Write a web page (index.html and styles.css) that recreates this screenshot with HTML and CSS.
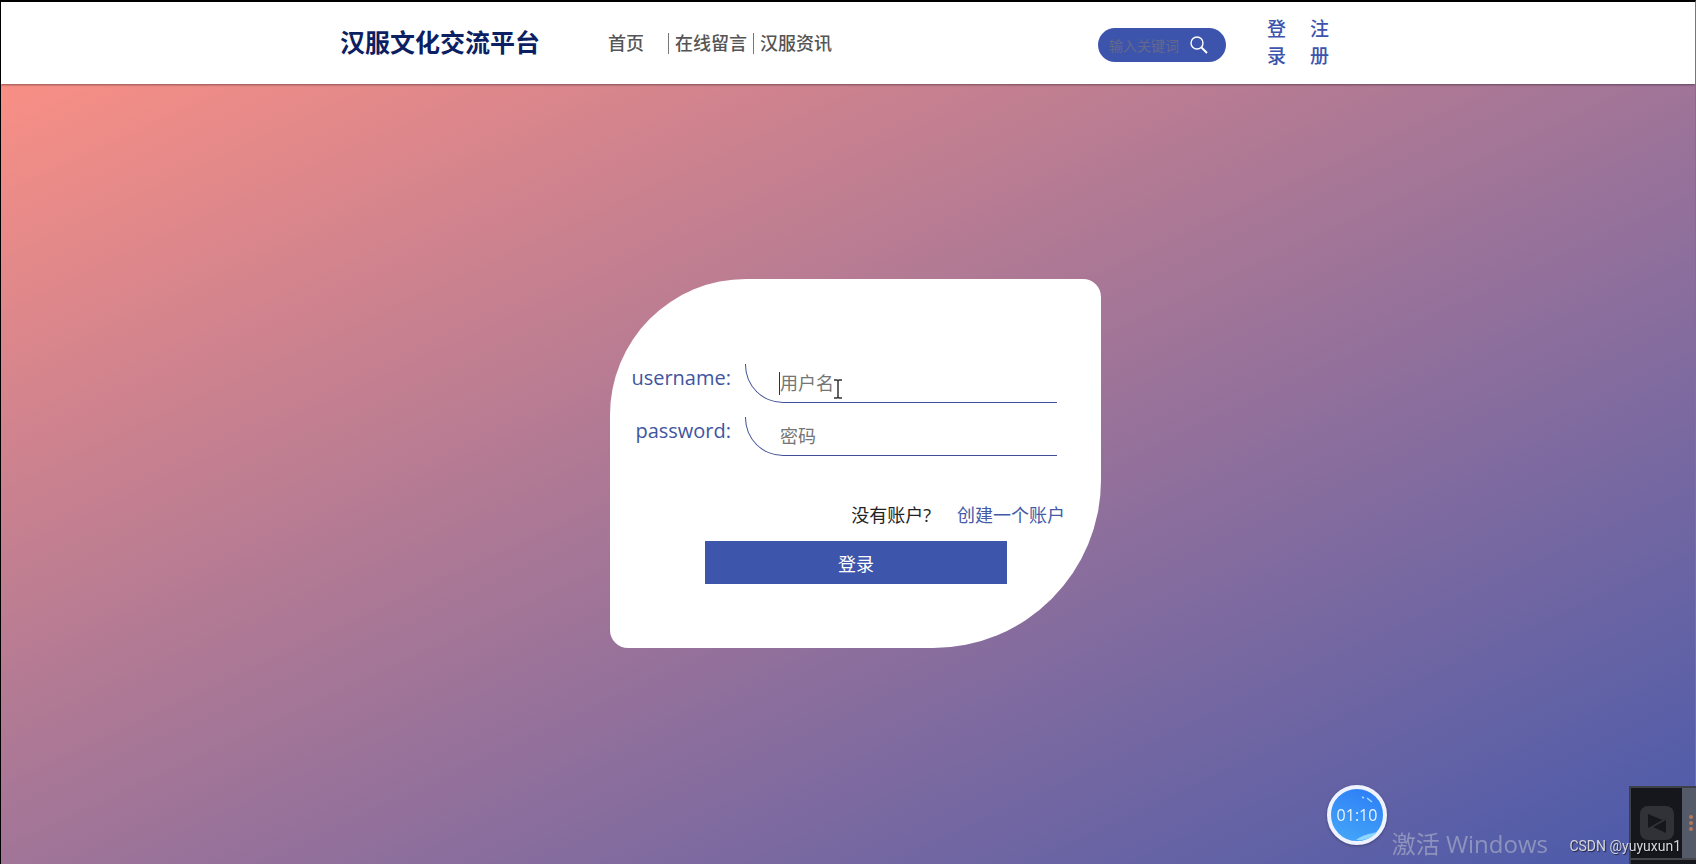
FILE: index.html
```
<!DOCTYPE html>
<html lang="zh-CN">
<head>
    <meta charset="UTF-8">
    <meta name="viewport" content="width=device-width, initial-scale=1.0">
    <title>汉服文化交流平台</title>
    <link rel="stylesheet" href="styles.css">
</head>
<body>

    <!-- Top navigation -->
    <header class="header">
        <div class="container">
            <a class="brand" href="#">汉服文化交流平台</a>
            <nav class="nav">
                <a class="nav-home" href="#">首页</a>
                <a class="nav-item" href="#">在线留言</a>
                <a class="nav-item" href="#">汉服资讯</a>
            </nav>
            <form class="search">
                <input type="text" class="search-input" placeholder="输入关键词" aria-label="输入关键词">
                <button type="button" class="search-btn" aria-label="搜索">
                    <svg width="18" height="18" viewBox="0 0 18 18" fill="none" stroke="#fff">
                        <circle cx="7" cy="7" r="6" stroke-width="1.4"/>
                        <path d="M11.5 11.5L17 17" stroke-width="2"/>
                    </svg>
                </button>
            </form>
            <div class="auth">
                <a href="#">登录</a>
                <a href="#">注册</a>
            </div>
        </div>
    </header>

    <!-- Login card -->
    <main class="main">
        <form class="card">
            <div class="field">
                <label for="username">username:</label>
                <div class="field-box">
                    <input type="text" id="username" placeholder="用户名">
                    <span class="caret"></span>
                    <svg class="pointer" width="10" height="20" viewBox="0 0 10 20" fill="none" stroke="#333" stroke-width="1.5">
                        <path d="M1 1H4L5 2L6 1H9M5 2V18M1 19H4L5 18L6 19H9"/>
                    </svg>
                </div>
            </div>
            <div class="field">
                <label for="password">password:</label>
                <div class="field-box">
                    <input type="password" id="password" placeholder="密码">
                </div>
            </div>
            <p class="signup"><span>没有账户?</span><a href="#">创建一个账户</a></p>
            <button type="button" class="login-btn">登录</button>
        </form>
    </main>

    <!-- Desktop overlays -->
    <div class="timer">
        <svg class="timer-shine" viewBox="0 0 52 52" fill="none">
            <path d="M25 51C31 46 38 45 46 43C42 48 35 52 25 51Z" fill="#8fd6ff"/>
            <path d="M31 8L33 9M36 9L41 13" stroke="#a9d8ff" stroke-width="1.5"/>
        </svg>
        <span>01:10</span>
    </div>
    <div class="activate">激活 Windows</div>
    <div class="recorder">
        <div class="recorder-view">
            <svg width="34" height="34" viewBox="0 0 34 34">
                <rect width="34" height="34" rx="8" fill="#303237"/>
                <path d="M8 8L25 15L8 23ZM26 27L11 20L26 13Z" fill="#15171d"/>
                <path d="M8 23L26 13" stroke="#303237" stroke-width="2"/>
            </svg>
        </div>
        <div class="recorder-bar"><i></i><i></i><i></i></div>
    </div>
    <div class="credit">CSDN @yuyuxun1</div>

</body>
</html>
```
FILE: styles.css
```
/* General */
* {
    box-sizing: border-box;
}

body {
    margin: 0;
    min-height: 100vh;
    display: flex;
    flex-direction: column;
    border-top: 2px solid #000;
    border-left: 1px solid #000;
    border-right: 1px solid #77777f;
    font-family: "Open Sans", "Noto Sans CJK SC", sans-serif;
    font-size: 18px;
    background-color: #fff;
}

a {
    text-decoration: none;
}

input,
button {
    font-family: inherit;
    border: none;
    outline: none;
}

/* Header */
.header {
    position: relative;
    background-color: #fff;
    box-shadow: 0 1px 2px rgba(0, 0, 0, .4);
}

.container {
    max-width: 1016px;
    height: 82px;
    margin: 0 auto;
    padding-right: 26px;
    display: flex;
    align-items: center;
}

.brand {
    font-size: 25px;
    line-height: 32px;
    font-weight: bold;
    color: #0d1f63;
    margin-bottom: 3px;
}

.nav {
    display: flex;
    margin-left: 68px;
    font-size: 18px;
    line-height: 21px;
    font-weight: 500;
}

.nav a {
    color: #555;
}

.nav-home {
    padding-right: 24px;
}

.nav-item {
    padding: 0 6px;
    border-left: 1px solid #777;
}

/* Search */
.search {
    display: flex;
    align-items: center;
    width: 128px;
    height: 34px;
    margin-left: auto;
    margin-top: 4px;
    padding: 0 18px 0 11px;
    border-radius: 17px;
    background-color: #3d54ad;
}

.search-input {
    flex: 1;
    min-width: 0;
    padding: 0;
    font-size: 14px;
    color: #fff;
    background: transparent;
}

.search-input::placeholder {
    color: #64698a;
}

.search-btn {
    display: flex;
    margin-left: 8px;
    padding: 0;
    background: transparent;
    cursor: pointer;
}

.auth {
    display: flex;
    gap: 23px;
    margin-left: 41px;
}

.auth a {
    width: 20px;
    font-size: 19px;
    line-height: 27px;
    font-weight: 500;
    color: #3d54ad;
}

/* Login */
.main {
    flex: 1;
    display: flex;
    align-items: center;
    justify-content: center;
    padding: 0 0 21px 15px;
    background: linear-gradient(155deg, #f88f85 0%, #495aab 100%);
}

.card {
    width: 491px;
    padding: 85px 36px 64px 20px;
    border-radius: 136px 18px 168px 18px;
    background-color: #fff;
}

.field {
    display: flex;
    margin-bottom: 14px;
}

.field label {
    width: 101px;
    margin-right: 14px;
    font-size: 20px;
    line-height: 28px;
    text-align: right;
    color: #3f55a0;
}

.field-box {
    position: relative;
    flex: 1;
    margin-right: 8px;
}

.field input {
    display: block;
    width: 100%;
    height: 39px;
    padding: 0 0 0 34px;
    font-size: 18px;
    border-left: 1px solid #3f5196;
    border-bottom: 1px solid #3f5196;
    border-bottom-left-radius: 38px;
    background: transparent;
}

.field input::placeholder {
    color: #757575;
}

.caret {
    position: absolute;
    left: 34px;
    top: 8px;
    width: 1px;
    height: 23px;
    background-color: #333;
}

.pointer {
    position: absolute;
    left: 88px;
    top: 15px;
}

.signup {
    display: flex;
    justify-content: flex-end;
    gap: 26px;
    margin: 47px 0 14px;
    line-height: 24px;
    color: #222;
}

.signup a {
    color: #4459a8;
}

.login-btn {
    display: block;
    width: 302px;
    height: 43px;
    margin-left: 75px;
    padding: 0;
    font-size: 18px;
    color: #fff;
    background-color: #3d55ab;
    cursor: pointer;
}

/* Overlays */
.timer {
    position: fixed;
    right: 309px;
    bottom: 19px;
    width: 60px;
    height: 60px;
    display: flex;
    align-items: center;
    justify-content: center;
    border: 4px solid #eef3ff;
    border-radius: 50%;
    font-size: 16px;
    color: #e6f3ff;
    background: linear-gradient(200deg, #2c7cf6, #45a8f8);
    box-shadow: 0 1px 3px rgba(0, 0, 0, .3);
}

.timer-shine {
    position: absolute;
    width: 52px;
    height: 52px;
}

.timer span {
    position: relative;
}

.activate {
    position: fixed;
    right: 148px;
    bottom: 4px;
    font-size: 24px;
    line-height: 32px;
    color: #8e93bd;
}

.recorder {
    position: fixed;
    right: 0;
    bottom: 0;
    width: 67px;
    height: 78px;
    display: flex;
    border: 2px solid #3e4047;
    border-width: 2px 0 0 2px;
    background-color: #15171d;
}

.recorder-view {
    flex: 1;
    height: 72px;
    padding: 18px 0 0 9px;
    border-bottom: 2px solid #45474c;
}

.recorder-bar {
    width: 14px;
    height: 72px;
    display: flex;
    flex-direction: column;
    align-items: center;
    gap: 2px;
    padding: 27px 0 0 4px;
    background-color: #555a68;
    border-bottom: 2px solid #45474c;
}

.recorder-bar i {
    width: 4px;
    height: 4px;
    border-radius: 50%;
    background-color: #b5775c;
}

.credit {
    position: fixed;
    right: 15px;
    bottom: 9px;
    font-family: Roboto, sans-serif;
    font-size: 14px;
    line-height: 18px;
    color: #d5d6dc;
    text-shadow: 1px 1px 1px rgba(0, 0, 0, .6);
}
```
